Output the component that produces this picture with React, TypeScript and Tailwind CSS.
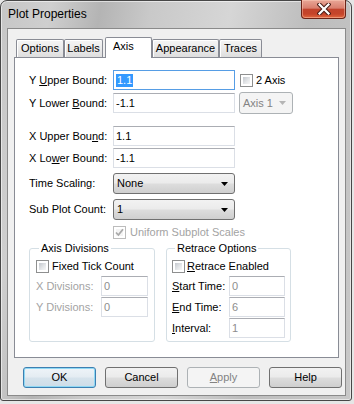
import React from 'react';

const frameBg =
  'bg-[linear-gradient(100deg,#c6c6c6_0%,#cfcfcf_12%,#b4b4b4_24%,#c9c9c9_36%,#d6d6d6_55%,#bdbdbd_74%,#c8c8c8_100%)]';
const btnBg =
  'bg-[linear-gradient(to_bottom,#f2f2f2_0%,#ebebeb_48%,#dddddd_52%,#cfcfcf_100%)]';

function Check({ checked = false, disabled = false }: { checked?: boolean; disabled?: boolean }) {
  return (
    <div
      className={`relative w-[13px] h-[13px] shrink-0 border p-[2px] bg-white ${
        disabled ? 'border-[#bcbcbc]' : 'border-[#8e8f8f]'
      }`}
    >
      <div
        className={`w-full h-full ${
          disabled
            ? 'bg-[#f4f4f4]'
            : 'bg-[linear-gradient(135deg,#c4c8ce_0%,#e6e8ea_60%,#f7f7f7_100%)]'
        }`}
      />
      {checked && (
        <svg className="absolute left-[-1px] top-[-1px]" width="13" height="13" viewBox="0 0 13 13">
          <path d="M3 6.5 L5.4 9 L10 3.2" fill="none" stroke={disabled ? '#a9a9a9' : '#4a5f97'} strokeWidth="1.8" />
        </svg>
      )}
    </div>
  );
}

function Field({
  value,
  w,
  disabled = false,
  focused = false,
  selected = false,
}: {
  value: string;
  w: string;
  disabled?: boolean;
  focused?: boolean;
  selected?: boolean;
}) {
  return (
    <div
      className={`${w} h-[20px] shrink-0 flex items-center pl-[2px] border bg-white ${
        focused
          ? 'border-[#569de5]'
          : 'border-[#dbdfe6] border-t-[#abadb3]'
      } ${disabled ? 'text-[#8d8d8d]' : 'text-black'}`}
    >
      {selected ? <span className="bg-[#3399ff] text-white px-px">{value}</span> : <span>{value}</span>}
    </div>
  );
}

function Select({ value, w, h, disabled = false }: { value: string; w: string; h: string; disabled?: boolean }) {
  return (
    <div
      className={`${w} ${h} shrink-0 flex items-center pl-[3px] pr-[6px] border rounded-[3px] ${
        disabled ? 'border-[#adb2b5] bg-[#f4f4f4] text-[#838383]' : `border-[#707070] ${btnBg} text-black`
      }`}
    >
      <span className="flex-1">{value}</span>
      <svg width="7" height="4" viewBox="0 0 7 4">
        <path d="M0 0 H7 L3.5 4 Z" fill={disabled ? '#b5b5b5' : '#000'} />
      </svg>
    </div>
  );
}

function Label({ children, w, gray = false }: { children: React.ReactNode; w: string; gray?: boolean }) {
  return <div className={`${w} shrink-0 whitespace-nowrap ${gray ? 'text-[#a3a3a3]' : ''}`}>{children}</div>;
}

function U({ children }: { children: React.ReactNode }) {
  return <span className="underline">{children}</span>;
}

function Button({ children, kind }: { children: React.ReactNode; kind?: 'default' | 'disabled' }) {
  const style =
    kind === 'default'
      ? 'border-[#3c7fb1] bg-[linear-gradient(to_bottom,#eef4f8_0%,#e4ecf2_48%,#d6e3ec_52%,#cddde8_100%)] shadow-[inset_0_0_0_1px_#8fd8f4]'
      : kind === 'disabled'
        ? 'border-[#adb2b5] bg-[#f4f4f4] text-[#838383]'
        : `border-[#707070] ${btnBg}`;
  return (
    <div className={`w-[73px] h-[21px] flex items-center justify-center border rounded-[3px] ${style}`}>
      {children}
    </div>
  );
}

function CloseButton() {
  return (
    <div className="ml-auto mr-[5px] -mt-px w-[45px] h-[19px] shrink-0 rounded-b-[4px] border border-t-0 border-[#6b2317] bg-[linear-gradient(to_bottom,#e9a797_0%,#d97f6e_45%,#c2432c_52%,#c5442a_78%,#e2683f_100%)] shadow-[inset_0_0_0_1px_rgba(255,210,190,0.45)] flex items-center justify-center">
      <svg width="14" height="12" viewBox="0 0 14 12">
        <path d="M2.5 1.5 L11.5 10.5 M11.5 1.5 L2.5 10.5" stroke="#4a1d16" strokeWidth="4.2" strokeLinecap="square" />
        <path d="M2.5 1.5 L11.5 10.5 M11.5 1.5 L2.5 10.5" stroke="#ffffff" strokeWidth="2.2" strokeLinecap="square" />
      </svg>
    </div>
  );
}

const tabs = [
  { name: 'Options', w: 'w-[48px]' },
  { name: 'Labels', w: 'w-[39px]' },
  { name: 'Axis', w: 'w-[47px]', active: true },
  { name: 'Appearance', w: 'w-[67px]' },
  { name: 'Traces', w: 'w-[43px]' },
];

export default function App() {
  return (
    <div className="w-[354px] h-[404px] bg-[#e6e6e6] font-['Liberation_Sans',Arial,sans-serif] text-[11px] leading-[13px] text-black">
      <div
        className={`w-[352px] h-[401px] rounded-t-[7px] rounded-b-[3px] border border-[#474747] ${frameBg} shadow-[inset_0_0_0_1px_rgba(255,255,255,0.55)] flex flex-col`}
      >
        {/* title bar */}
        <div className="h-[27px] shrink-0 flex items-start">
          <span className="ml-[7px] mt-[6px] text-[12px] leading-[14px]">Plot Properties</span>
          <CloseButton />
        </div>

        {/* client area */}
        <div className="ml-[6px] mr-[5px] h-[368px] border border-[#8a8a8a] bg-[#f0f0f0] flex flex-col">
          <div className="mt-[8px] mx-[6px] flex flex-col">
            {/* tab strip */}
            <div className="relative z-10 h-[20px] flex items-end pl-[2px]">
              {tabs.map((t) =>
                t.active ? (
                  <div
                    key={t.name}
                    className={`${t.w} ml-[2px] h-[21px] -mb-px border border-b-0 border-[#898c95] rounded-t-[2px] bg-white pl-[7px] pt-[2px]`}
                  >
                    {t.name}
                  </div>
                ) : (
                  <div
                    key={t.name}
                    className={`${t.w} h-[18px] border border-b-0 border-[#898c95] rounded-t-[2px] bg-[linear-gradient(to_bottom,#f5f5f5_0%,#ebebeb_50%,#dedede_100%)] shadow-[inset_1px_1px_0_#ffffff] flex items-center justify-center`}
                  >
                    {t.name}
                  </div>
                ),
              )}
            </div>

            {/* tab panel */}
            <div className="h-[301px] border border-[#898c95] bg-white pl-[14px] flex flex-col">
              <div className="mt-[12px] h-[20px] flex items-center">
                <Label w="w-[84px]">
                  Y <U>U</U>pper Bound:
                </Label>
                <Field w="w-[122px]" value="1.1" focused selected />
                <div className="ml-[5px]">
                  <Check />
                </div>
                <span className="ml-[3px]">2 Axis</span>
              </div>
              <div className="mt-[3px] h-[20px] flex items-center">
                <Label w="w-[84px]">
                  Y Lower <U>B</U>ound:
                </Label>
                <Field w="w-[122px]" value="-1.1" />
                <div className="ml-[4px]">
                  <Select w="w-[54px]" h="h-[22px]" value="Axis 1" disabled />
                </div>
              </div>
              <div className="mt-[13px] h-[20px] flex items-center">
                <Label w="w-[84px]">
                  X Upper Bou<U>n</U>d:
                </Label>
                <Field w="w-[122px]" value="1.1" />
              </div>
              <div className="mt-[2px] h-[20px] flex items-center">
                <Label w="w-[84px]">
                  X Lo<U>w</U>er Bound:
                </Label>
                <Field w="w-[122px]" value="-1.1" />
              </div>
              <div className="mt-[5px] h-[21px] flex items-center">
                <Label w="w-[84px]">Time Scaling:</Label>
                <Select w="w-[122px]" h="h-[21px]" value="None" />
              </div>
              <div className="mt-[5px] h-[21px] flex items-center">
                <Label w="w-[84px]">Sub Plot Count:</Label>
                <Select w="w-[122px]" h="h-[21px]" value="1" />
              </div>
              <div className="mt-[6px] h-[13px] pl-[84px] flex items-center">
                <Check checked disabled />
                <span className="ml-[4px] text-[#a3a3a3]">Uniform Subplot Scales</span>
              </div>

              <div className="mt-[3px] flex gap-[11px]">
                <fieldset className="w-[126px] h-[100px] border border-[#d5dfe5] rounded-[3px] px-[6px]">
                  <legend className="ml-[3px] px-[2px] leading-[13px]">Axis Divisions</legend>
                  <div className="mt-[5px] h-[13px] flex items-center">
                    <Check />
                    <span className="ml-[3px]">Fixed Tick Count</span>
                  </div>
                  <div className="mt-[3px] h-[20px] flex items-center">
                    <Label w="w-[65px]" gray>
                      X Divisions:
                    </Label>
                    <Field w="w-[47px]" value="0" disabled />
                  </div>
                  <div className="mt-[1px] h-[20px] flex items-center">
                    <Label w="w-[65px]" gray>
                      Y Divisions:
                    </Label>
                    <Field w="w-[47px]" value="0" disabled />
                  </div>
                </fieldset>

                <fieldset className="w-[125px] h-[100px] border border-[#d5dfe5] rounded-[3px] px-[5px]">
                  <legend className="ml-[3px] px-[2px] leading-[13px]">Retrace Options</legend>
                  <div className="mt-[5px] h-[13px] flex items-center">
                    <Check />
                    <span className="ml-[2px]">
                      <U>R</U>etrace Enabled
                    </span>
                  </div>
                  <div className="mt-[3px] h-[20px] flex items-center">
                    <Label w="w-[57px]">
                      <U>S</U>tart Time:
                    </Label>
                    <Field w="w-[56px]" value="0" disabled />
                  </div>
                  <div className="mt-[1px] h-[20px] flex items-center">
                    <Label w="w-[57px]">
                      <U>E</U>nd Time:
                    </Label>
                    <Field w="w-[56px]" value="6" disabled />
                  </div>
                  <div className="mt-[1px] h-[20px] flex items-center">
                    <Label w="w-[57px]">
                      <U>I</U>nterval:
                    </Label>
                    <Field w="w-[56px]" value="1" disabled />
                  </div>
                </fieldset>
              </div>
            </div>
          </div>

          {/* buttons */}
          <div className="mt-[9px] ml-[15px] flex gap-[9px]">
            <Button kind="default">OK</Button>
            <Button>Cancel</Button>
            <Button kind="disabled">
              <U>A</U>pply
            </Button>
            <Button>Help</Button>
          </div>
        </div>
      </div>
    </div>
  );
}
